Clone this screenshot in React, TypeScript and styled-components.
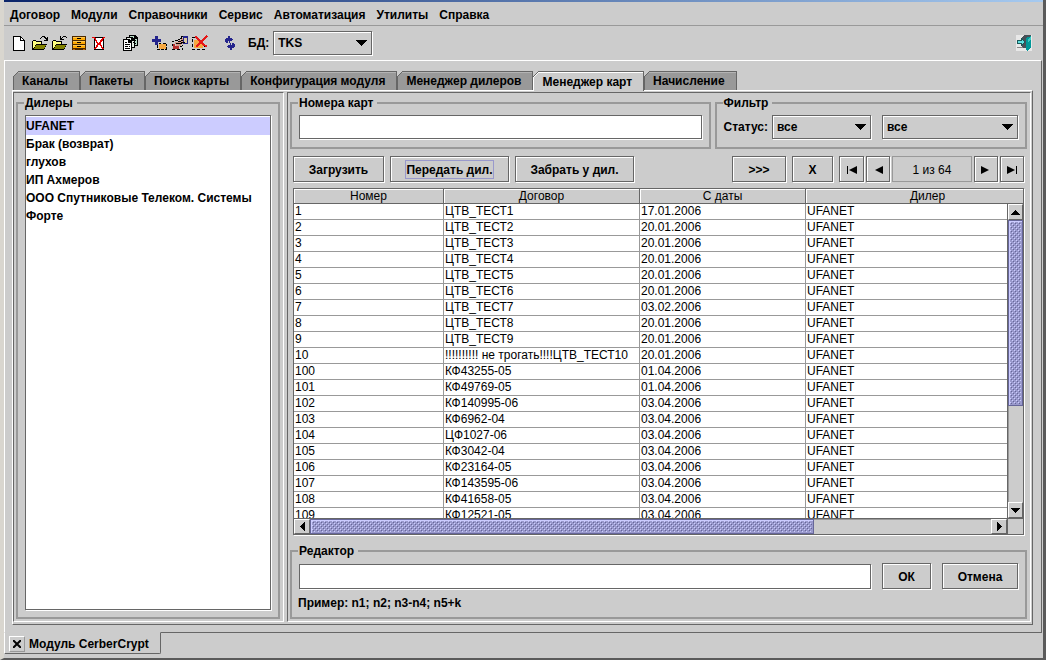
import React from "react";
import styled, { createGlobalStyle, css } from "styled-components";

const face = "#cccccc";
const shade = "#999999";
const dark = "#666666";
const lilac = "#ccccff";
const violet = "#9999cc";

const GlobalStyle = createGlobalStyle`
  *, *::before, *::after { box-sizing: border-box; }
  body {
    margin: 0;
    background: ${face};
    color: #000;
    font: bold 12px/14px "Liberation Sans", Arial, sans-serif;
  }
  button, input, select { font: inherit; color: inherit; border-radius: 0; margin: 0; }
`;

const raised = css`
  border: 1px solid ${dark};
  box-shadow: inset 1px 1px 0 #fff, 1px 1px 0 #fff;
`;

const Window = styled.div`
  display: flex;
  flex-direction: column;
  height: 100vh;
  min-height: 480px;
  background: ${face};
  border-left: 4px solid #d9d6cf;
  border-right: 3px solid #5a5a5a;
  border-bottom: 2px solid #5a5a5a;
`;

const TitleStrip = styled.div`
  flex: 0 0 2px;
  background: linear-gradient(90deg, #0a246a, #a6caf0);
`;

const MenuBar = styled.nav`
  display: flex;
  gap: 11px;
  height: 24px;
  align-items: center;
  padding: 2px 6px 0;
  border-bottom: 1px solid ${shade};
`;

const MenuItem = styled.button`
  padding: 0;
  border: 0;
  background: none;
  white-space: nowrap;
`;

const ToolBar = styled.div`
  display: flex;
  align-items: center;
  gap: 14px;
  height: 34px;
  padding: 0 11px 0 8px;
`;

const ToolGroup = styled.div<{ $push?: boolean; $gap?: number }>`
  display: flex;
  align-items: center;
  gap: ${(p) => p.$gap ?? 4}px;
  ${(p) => p.$push && "margin-left: auto;"}
`;

const IconButton = styled.button`
  display: block;
  width: 16px;
  height: 16px;
  padding: 0;
  border: 0;
  background: none;
  svg { display: block; }
`;

const SelectBox = styled.span<{ $width: number }>`
  position: relative;
  display: block;
  width: ${(p) => p.$width}px;
  height: 24px;
  svg { position: absolute; right: 5px; top: 9px; pointer-events: none; }
`;

const SelectField = styled.select`
  display: block;
  appearance: none;
  width: 100%;
  height: 100%;
  padding: 0 20px 0 4px;
  background: ${face};
  ${raised}
`;

const MainPane = styled.main`
  flex: 1;
  min-height: 0;
  display: flex;
  flex-direction: column;
  margin-right: 1px;
  padding: 10px 8px 7px 7px;
  border: 1px solid;
  border-color: #fff ${dark} ${dark} #fff;
`;

const TabRow = styled.div`
  display: flex;
  position: relative;
  padding-left: 1px;
`;

const Tab = styled.button<{ $active: boolean }>`
  position: relative;
  height: ${(p) => (p.$active ? 20 : 19)}px;
  margin-bottom: ${(p) => (p.$active ? -1 : 0)}px;
  padding: 0 11px 0 8px;
  white-space: nowrap;
  border: 1px solid ${dark};
  border-bottom: 0;
  border-left-color: ${(p) => (p.$active ? "#fff" : dark)};
  background: ${(p) => (p.$active ? face : shade)};
  box-shadow: inset 0 1px 0 ${(p) => (p.$active ? "#fff" : "#b4b4b4")};
  z-index: ${(p) => (p.$active ? 1 : 0)};
  svg { position: absolute; left: -1px; top: -1px; }
`;

const TabPanel = styled.div`
  flex: 1;
  min-height: 0;
  display: flex;
  gap: 3px;
  padding: 1px 1px 2px 0;
  border: 1px solid;
  border-color: #fff ${dark} ${dark} #fff;
`;

const Sunken = styled.section<{ $width?: number }>`
  ${(p) => (p.$width ? `flex: 0 0 ${p.$width}px;` : "flex: 1;")}
  min-width: 0;
  display: flex;
  flex-direction: column;
  padding: 4px 3px 2px 2px;
  border: 1px solid;
  border-color: ${dark} #fff #fff ${dark};
`;

const Group = styled.fieldset<{ $grow?: boolean }>`
  display: flex;
  flex-direction: column;
  min-width: 0;
  min-height: 0;
  margin: 0;
  padding: 6px 7px 7px;
  border: 2px solid ${shade};
  ${(p) => p.$grow && "flex: 1;"}
`;

const Legend = styled.legend`
  height: 12px;
  padding: 0 4px 0 1px;
  margin-left: -1px;
  line-height: 12px;
`;

const DealerList = styled.ul`
  flex: 1;
  margin: 0;
  padding: 1px 0;
  list-style: none;
  background: #fff;
  border: 1px solid ${dark};
  box-shadow: 1px 1px 0 #fff;
`;

const Dealer = styled.li<{ $selected: boolean }>`
  height: 18px;
  line-height: 18px;
  white-space: nowrap;
  background: ${(p) => (p.$selected ? lilac : "transparent")};
`;

const Row = styled.div<{ $gap: number }>`
  display: flex;
  align-items: center;
  gap: ${(p) => p.$gap}px;
`;

const TopGroups = styled.div`
  display: flex;
  gap: 4px;
`;

const TextField = styled.input`
  flex: 1;
  min-width: 0;
  width: 100%;
  height: 25px;
  flex-basis: auto;
  padding: 0 3px;
  background: #fff;
  border: 1px solid ${dark};
  box-shadow: 1px 1px 0 #fff;
`;

const FieldLine = styled.div`
  display: flex;
  height: 25px;
  > input { height: 24px; }
`;

const Commands = styled.div`
  display: flex;
  gap: 6px;
  margin: 7px 3px 6px;
`;

const Button = styled.button<{ $width: number }>`
  flex: none;
  display: flex;
  align-items: center;
  justify-content: center;
  width: ${(p) => p.$width}px;
  height: 26px;
  padding: 1px 0 0;
  white-space: nowrap;
  background: ${face};
  ${raised}
`;

const FocusRing = styled.span`
  display: block;
  padding: 2px 0 1px;
  outline: 1px solid ${violet};
`;

const Pager = styled.div`
  display: flex;
  gap: 2px;
`;

const PageInfo = styled.span`
  width: 80px;
  height: 26px;
  line-height: 26px;
  text-align: center;
  font-weight: normal;
  border: 1px solid ${shade};
`;

const Spacer = styled.span`
  flex: 1;
`;

const ScrollPane = styled.div`
  flex: 1;
  min-height: 0;
  display: grid;
  grid-template: 15px minmax(0, 1fr) 16px / minmax(0, 1fr) 16px;
  margin: 0 3px 10px;
  border: 1px solid ${dark};
  box-shadow: 1px 1px 0 #fff;
`;

const Viewport = styled.div`
  grid-area: 1 / 1 / 3 / 3;
  overflow: hidden;
  background: linear-gradient(${face} 15px, #fff 15px);
`;

const Grid = styled.table`
  width: calc(100% + 27px);
  table-layout: fixed;
  border-spacing: 0;
  font-weight: normal;
`;

const HeadCell = styled.th`
  height: 15px;
  padding: 0;
  line-height: 14px;
  font-weight: normal;
  background: ${face};
  border-right: 1px solid ${dark};
  border-bottom: 1px solid ${dark};
  box-shadow: inset 1px 1px 0 #fff;
`;

const Cell = styled.td`
  height: 16px;
  padding: 0 0 0 1px;
  line-height: 15px;
  white-space: nowrap;
  overflow: hidden;
  border-right: 1px solid ${shade};
  border-bottom: 1px solid ${shade};
`;

const ScrollBar = styled.div<{ $vertical?: boolean }>`
  grid-area: ${(p) => (p.$vertical ? "2 / 2" : "3 / 1")};
  display: flex;
  flex-direction: ${(p) => (p.$vertical ? "column" : "row")};
  background: ${face};
  border: 0 solid ${dark};
  border-width: ${(p) => (p.$vertical ? "0 0 0 1px" : "1px 0 0 0")};
`;

const ScrollTrack = styled.div<{ $vertical?: boolean }>`
  flex: 1;
  display: flex;
  flex-direction: ${(p) => (p.$vertical ? "column" : "row")};
  box-shadow: inset 1px 1px 0 ${shade};
`;

const Thumb = styled.div<{ $size: string }>`
  flex: 0 0 ${(p) => p.$size};
  border: 1px solid #666699;
  box-shadow: inset 1px 1px 0 ${lilac}, inset -1px -1px 0 ${violet};
  background:
    conic-gradient(at 1px 1px, transparent 75%, ${lilac} 0) 1px 1px / 4px 4px,
    conic-gradient(at 1px 1px, transparent 75%, ${lilac} 0) 3px 3px / 4px 4px,
    conic-gradient(at 1px 1px, transparent 75%, #666699 0) 2px 2px / 4px 4px,
    conic-gradient(at 1px 1px, transparent 75%, #666699 0) 0 0 / 4px 4px,
    ${violet};
`;

const ScrollButton = styled.button`
  flex: 0 0 16px;
  display: flex;
  align-items: center;
  justify-content: center;
  min-width: 15px;
  min-height: 15px;
  padding: 0;
  background: ${face};
  border: 1px solid;
  border-color: #fff ${dark} ${dark} #fff;
`;

const Corner = styled.div`
  grid-area: 3 / 2;
  background: ${face};
  border: 1px solid ${dark};
  border-width: 1px 0 0 1px;
`;

const Hint = styled.p`
  margin: 7px 0 0 -1px;
  line-height: 14px;
`;

const TaskStrip = styled.footer`
  position: relative;
  display: flex;
  height: 26px;
  margin-top: -1px;
`;

const TaskTab = styled.div`
  display: flex;
  align-items: center;
  gap: 4px;
  height: 22px;
  padding: 1px 11px 0 4px;
  background: ${face};
  border: 1px solid;
  border-color: ${face} ${dark} ${dark} #fff;
  border-bottom-right-radius: 2px;
`;

const CloseButton = styled.button`
  display: flex;
  align-items: center;
  justify-content: center;
  width: 16px;
  height: 16px;
  padding: 0;
  background: ${face};
  border: 1px solid;
  border-color: #fff ${shade} ${shade} #fff;
`;

type Dir = "up" | "down" | "left" | "right";
const arrowPaths: Record<Dir, string> = {
  up: "M4 0h1v1h1v1h1v1h1v1h1v1H0V4h1V3h1V2h1V1h1z",
  down: "M0 0h9v1H8v1H7v1H6v1H5v1H4V4H3V3H2V2H1V1H0z",
  left: "M5 0v9H4V8H3V7H2V6H1V5H0V4h1V3h1V2h1V1h1V0z",
  right: "M0 0v9h1V8h1V7h1V6h1V5h1V4H4V3H3V2H2V1H1V0z",
};

const Arrow = ({ dir }: { dir: Dir }) => {
  const tall = dir === "left" || dir === "right";
  return (
    <svg width={tall ? 5 : 9} height={tall ? 9 : 5} shapeRendering="crispEdges">
      <path d={arrowPaths[dir]} />
    </svg>
  );
};

const PagerGlyph = ({ back, edge }: { back?: boolean; edge?: boolean }) => (
  <svg width="12" height="8" viewBox="0 0 12 8">
    <g transform={back ? "translate(12 0) scale(-1 1)" : undefined}>
      <path d="M1 0L9 4L1 8z" />
      {edge && <path d="M10 0h1v8h-1z" />}
    </g>
  </svg>
);

const Combo = ({ width, value, label }: { width: number; value: string; label: string }) => (
  <SelectBox $width={width}>
    <SelectField aria-label={label} defaultValue={value}>
      <option>{value}</option>
    </SelectField>
    <svg width="11" height="6" shapeRendering="crispEdges">
      <path d="M0 0h11v1h-1v1H9v1H8v1H7v1H6v1H5V5H4V4H3V3H2V2H1V1H0z" />
    </svg>
  </SelectBox>
);

const Icon = ({ children }: { children: React.ReactNode }) => (
  <svg width="16" height="16" viewBox="0 0 16 16" shapeRendering="crispEdges">
    {children}
  </svg>
);

const FolderBody = () => (
  <>
    <path d="M0 15V6h1V5h3v1h6v3h5l-1 2-1 2-1 2z" fill="#000" />
    <path d="M1 13V6h3v1h5v2H4v1H3v2H2v2z" fill="#ffff80" />
    <path d="M2 14l2-4h10l-1 2-2 2z" fill="#808000" />
  </>
);

const icons: Record<string, React.ReactNode> = {
  new: (
    <Icon>
      <path d="M1 1h8v1h1v1h1v1h1v1h1v11H1z" />
      <path d="M2 2h6v4h4v9H2z" fill="#fff" />
      <path d="M9 3h1v1h1v1H9z" fill="#fff" />
    </Icon>
  ),
  open: (
    <Icon>
      <FolderBody />
      <path d="M8 3h1V2h1V1h3v1h1v1h1V2h1v4h-4V5h2V4h-1V3h-1V2h-2v1H9v1H8z" />
    </Icon>
  ),
  openBack: (
    <Icon>
      <FolderBody />
      <path d="M15 3h-1V2h-3v1h-1v1h2v1H8V1h1v2h1V2h1V1h3v1h1z" />
    </Icon>
  ),
  cabinet: (
    <Icon>
      <path d="M0 1h14v14H0z" fill="#4a2800" />
      <path d="M1 2h12v3H1zM1 6h12v3H1zM1 10h12v3H1z" fill="#ffa800" />
      <path d="M1 2h12v1H1zM1 6h12v1H1zM1 10h12v1H1z" fill="#ffc850" />
      <path d="M5 3h4v1H5zM5 7h4v1H5zM5 11h4v1H5z" />
      <path d="M1 14h2v1H1zM11 14h2v1h-2z" fill="#c06000" />
    </Icon>
  ),
  remove: (
    <Icon>
      <path d="M2 2h10v13H2z" />
      <path d="M3 3h8v11H3z" fill="#fff" />
      <path d="M1 2h2v1h1v2h1v2h1v1h1V7h1V5h1V4h1V3h1V2h1v2h-1v2h-1v1H9v3h1v2h1v2h-1v-1H9v-2H8v-1H6v2H5v1H4v1H3v-2h1v-2h1V8H4V6H3V4H2V3H1z" fill="#e60000" />
      <path d="M0 2h2v1H0zM11 2h2v1h-2zM2 13h2v1H2zM10 13h2v1h-2z" fill="#e60000" />
    </Icon>
  ),
  copies: (
    <Icon>
      <path d="M7 0h6l3 3v8H7z" />
      <path d="M8 1h4v3h3v6H8z" fill="#b8dcc8" />
      <path d="M4 2h6l3 3v8H4z" />
      <path d="M5 3h4v3h3v6H5z" fill="#e8f0e8" />
      <path d="M1 4h6l3 3v9H1z" />
      <path d="M2 5h4v3h3v7H2z" fill="#fff" />
      <path d="M3 7h2v1H3zM3 9h5v1H3zM3 11h3v1H3zM3 13h5v1H3zM7 11h1v1H7zM10 4h1v1h-1zM11 7h1v1h-1zM13 5h1v1h-1zM13 8h1v1h-1z" />
    </Icon>
  ),
  add: (
    <Icon>
      <path d="M3 1h3v3h3v3H6v3H3V7H0V4h3z" fill="#24248c" />
      <path d="M7 9h7v5H7z" fill="#f8a840" />
      <path d="M7 8h2v1H7zM11 8h3v1h-3zM14 9h1v2h-1zM5 10h1v3H5zM14 12h1v2h-1zM5 14h3v1H5zM9 14h3v1H9zM13 14h2v1h-2z" />
    </Icon>
  ),
  edit: (
    <Icon>
      <path d="M11 1h5v8h-5z" fill="#24248c" />
      <path d="M12 3h3v5h-3z" fill="#d8c8a0" />
      <path d="M3 7h4V5h2V3h2v6H9v2H4z" fill="#d89888" />
      <path d="M3 5h3v1H3zM6 4h2v1H6zM8 3h1V1h2v1h-1v2H8zM6 6h3v1H6zM9 5h2v1H9zM4 8h6v1H4zM9 7h4v1H9zM10 10h1v1h-1zM8 11h2v1H8z" />
      <path d="M1 9h2v2h4v3H1z" fill="#b83030" />
      <path d="M0 6h2v1H0zM0 9h1v2H0zM0 14h3v1H0zM5 14h3v1H5zM10 13h1v2h-1z" />
    </Icon>
  ),
  erase: (
    <Icon>
      <path d="M2 5h9v8H2z" fill="#f8a840" />
      <path d="M0 2h3v1H0zM0 4h1v3H0zM0 9h1v3H0zM0 14h3v1H0zM5 14h3v1H5zM10 14h3v1h-3zM12 9h1v3h-1z" />
      <path d="M4 2l9 9M15 1L4 12" stroke="#e61818" strokeWidth="1.5" fill="none" />
      <path d="M13 10h2v2h-2zM3 1h2v1H3z" fill="#e61818" />
    </Icon>
  ),
  refresh: (
    <Icon>
      <path d="M6 1h2v2h2v1h1v1h-1v1H8v2H7V6H6v2H4V7H3V4h1V3h2z" fill="#24248c" />
      <path d="M6 1h2v2h2v1h1v1h-1v1H8v2H7V6H6v2H4V7H3V4h1V3h2z" fill="#24248c" transform="rotate(180 8 8)" />
    </Icon>
  ),
  exit: (
    <Icon>
      <path d="M0 0h16v16H0z" fill="#e8e8e8" />
      <path d="M6 2l3-2h6v13H6z" fill="#485058" />
      <path d="M10 3l5-2v12l-4 3-1-2z" fill="#009898" />
      <path d="M12 4l3-2v3l-3 2z" fill="#40c8c0" />
      <path d="M1 5h4V3l4 4-4 4V9H1z" fill="#185858" />
      <path d="M2 6h4V5l2 2-2 2V8H2z" fill="#60e0e0" />
      <path d="M1 12h6v1H1z" fill="#888" />
    </Icon>
  ),
};

const toolGroups: [string, string][][] = [
  [["new", "Новый"], ["open", "Открыть"], ["openBack", "Вернуть"], ["cabinet", "Архив"], ["remove", "Удалить"]],
  [["copies", "Копии"]],
  [["add", "Добавить"], ["edit", "Изменить"], ["erase", "Стереть"]],
];

const menus = ["Договор", "Модули", "Справочники", "Сервис", "Автоматизация", "Утилиты", "Справка"];
const tabs = ["Каналы", "Пакеты", "Поиск карты", "Конфигурация модуля", "Менеджер дилеров", "Менеджер карт", "Начисление"];
const activeTab = "Менеджер карт";
const dealers = ["UFANET", "Брак (возврат)", "глухов", "ИП Ахмеров", "ООО Спутниковые Телеком. Системы", "Форте"];

const cards: [string, string, string][] = [
  ["1", "ЦТВ_ТЕСТ1", "17.01.2006"],
  ["2", "ЦТВ_ТЕСТ2", "20.01.2006"],
  ["3", "ЦТВ_ТЕСТ3", "20.01.2006"],
  ["4", "ЦТВ_ТЕСТ4", "20.01.2006"],
  ["5", "ЦТВ_ТЕСТ5", "20.01.2006"],
  ["6", "ЦТВ_ТЕСТ6", "20.01.2006"],
  ["7", "ЦТВ_ТЕСТ7", "03.02.2006"],
  ["8", "ЦТВ_ТЕСТ8", "20.01.2006"],
  ["9", "ЦТВ_ТЕСТ9", "20.01.2006"],
  ["10", "!!!!!!!!!! не трогать!!!!ЦТВ_ТЕСТ10", "20.01.2006"],
  ["100", "КФ43255-05", "01.04.2006"],
  ["101", "КФ49769-05", "01.04.2006"],
  ["102", "КФ140995-06", "03.04.2006"],
  ["103", "КФ6962-04", "03.04.2006"],
  ["104", "ЦФ1027-06", "03.04.2006"],
  ["105", "КФ3042-04", "03.04.2006"],
  ["106", "КФ23164-05", "03.04.2006"],
  ["107", "КФ143595-06", "03.04.2006"],
  ["108", "КФ41658-05", "03.04.2006"],
  ["109", "КФ12521-05", "03.04.2006"],
];

const TabCorner = ({ active }: { active: boolean }) => (
  <svg width="6" height="6" shapeRendering="crispEdges">
    <path d="M0 0h6v1H5v1H4v1H3v1H2v1H1v1H0z" fill={face} />
    <path d="M5 0h1v1H5zM4 1h1v1H4zM3 2h1v1H3zM2 3h1v1H2zM1 4h1v1H1zM0 5h1v1H0z" fill={dark} />
    {active && <path d="M5 1h1v1H5zM4 2h1v1H4zM3 3h1v1H3zM2 4h1v1H2zM1 5h1v1H1z" fill="#fff" />}
  </svg>
);

export default function App() {
  return (
    <Window>
      <GlobalStyle />
      <TitleStrip />
      <MenuBar>
        {menus.map((m) => (
          <MenuItem key={m}>{m}</MenuItem>
        ))}
      </MenuBar>
      <ToolBar>
        {toolGroups.map((group, i) => (
          <ToolGroup key={i}>
            {group.map(([name, title]) => (
              <IconButton key={name} aria-label={title}>{icons[name]}</IconButton>
            ))}
          </ToolGroup>
        ))}
        <ToolGroup $gap={10}>
          <IconButton aria-label="Обновить">{icons.refresh}</IconButton>
          <ToolGroup>
            <span>БД:</span>
            <Combo width={99} value="TKS" label="БД" />
          </ToolGroup>
        </ToolGroup>
        <ToolGroup $push>
          <IconButton aria-label="Выход">{icons.exit}</IconButton>
        </ToolGroup>
      </ToolBar>

      <MainPane>
        <TabRow role="tablist">
          {tabs.map((t) => (
            <Tab key={t} role="tab" aria-selected={t === activeTab} $active={t === activeTab}>
              <TabCorner active={t === activeTab} />
              {t}
            </Tab>
          ))}
        </TabRow>
        <TabPanel role="tabpanel">
          <Sunken $width={271}>
            <Group $grow>
              <Legend>Дилеры</Legend>
              <DealerList>
                {dealers.map((d, i) => (
                  <Dealer key={d} $selected={i === 0}>{d}</Dealer>
                ))}
              </DealerList>
            </Group>
          </Sunken>

          <Sunken>
            <TopGroups>
              <Group $grow>
                <Legend>Номера карт</Legend>
                <FieldLine>
                  <TextField aria-label="Номера карт" />
                </FieldLine>
              </Group>
              <Group>
                <Legend>Фильтр</Legend>
                <Row $gap={11}>
                  <Row $gap={4}>
                    <span>Статус:</span>
                    <Combo width={99} value="все" label="Статус" />
                  </Row>
                  <Combo width={136} value="все" label="Фильтр" />
                </Row>
              </Group>
            </TopGroups>

            <Commands>
              <Button $width={91}>Загрузить</Button>
              <Button $width={119}>
                <FocusRing>Передать дил.</FocusRing>
              </Button>
              <Button $width={119}>Забрать у дил.</Button>
              <Spacer />
              <Button $width={54}>&gt;&gt;&gt;</Button>
              <Button $width={41}>X</Button>
              <Pager>
                <Button $width={25} aria-label="Первая"><PagerGlyph back edge /></Button>
                <Button $width={24} aria-label="Назад"><PagerGlyph back /></Button>
                <PageInfo>1 из 64</PageInfo>
                <Button $width={24} aria-label="Вперёд"><PagerGlyph /></Button>
                <Button $width={24} aria-label="Последняя"><PagerGlyph edge /></Button>
              </Pager>
            </Commands>

            <ScrollPane>
              <Viewport>
                <Grid>
                  <colgroup>
                    <col width="150" />
                    <col width="196" />
                    <col width="166" />
                    <col />
                  </colgroup>
                  <thead>
                    <tr>
                      {["Номер", "Договор", "С даты", "Дилер"].map((h) => (
                        <HeadCell key={h} scope="col">{h}</HeadCell>
                      ))}
                    </tr>
                  </thead>
                  <tbody>
                    {cards.map(([id, contract, date]) => (
                      <tr key={id}>
                        <Cell>{id}</Cell>
                        <Cell>{contract}</Cell>
                        <Cell>{date}</Cell>
                        <Cell>UFANET</Cell>
                      </tr>
                    ))}
                  </tbody>
                </Grid>
              </Viewport>
              <ScrollBar $vertical>
                <ScrollButton aria-label="Вверх"><Arrow dir="up" /></ScrollButton>
                <ScrollTrack $vertical><Thumb $size="66%" /></ScrollTrack>
                <ScrollButton aria-label="Вниз"><Arrow dir="down" /></ScrollButton>
              </ScrollBar>
              <ScrollBar>
                <ScrollButton aria-label="Влево"><Arrow dir="left" /></ScrollButton>
                <ScrollTrack><Thumb $size="74%" /></ScrollTrack>
                <ScrollButton aria-label="Вправо"><Arrow dir="right" /></ScrollButton>
              </ScrollBar>
              <Corner />
            </ScrollPane>

            <Group>
              <Legend>Редактор</Legend>
              <Row $gap={11}>
                <TextField aria-label="Редактор" />
                <Button $width={49}>ОК</Button>
                <Button $width={76}>Отмена</Button>
              </Row>
              <Hint>Пример: n1; n2; n3-n4; n5+k</Hint>
            </Group>
          </Sunken>
        </TabPanel>
      </MainPane>

      <TaskStrip>
        <TaskTab>
          <CloseButton aria-label="Закрыть">
            <svg width="8" height="8" viewBox="0 0 8 8">
              <path d="M0 0l8 8M8 0L0 8" stroke="#000" strokeWidth="2" />
            </svg>
          </CloseButton>
          <span>Модуль CerberCrypt</span>
        </TaskTab>
      </TaskStrip>
    </Window>
  );
}
